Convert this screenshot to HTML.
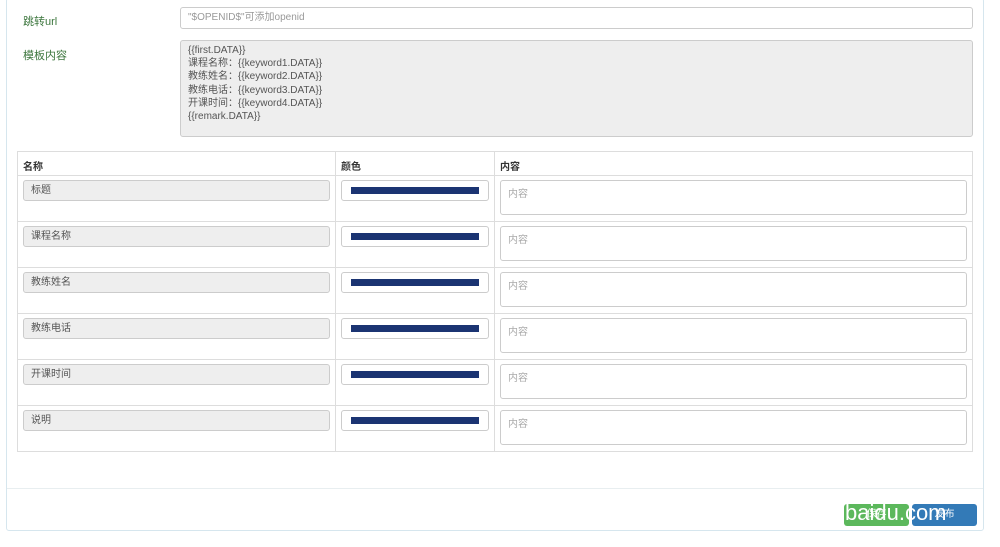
<!DOCTYPE html>
<html><head><meta charset="utf-8"><style>
body{margin:0;width:1000px;height:547px;background:#fff;font-family:"Liberation Sans","Noto Sans CJK SC",sans-serif;font-size:10px;color:#555;position:relative;overflow:hidden}
.abs{position:absolute;box-sizing:border-box}
.panel{left:6px;top:-2px;width:978px;height:533px;border:1px solid #d6e6ee;border-radius:3px}
.lbl{color:#3c763d;font-size:11px}
.inp{border:1px solid #ccc;border-radius:3px;background:#fff}
.gray{background:#eee}
.hl{position:absolute;left:17px;width:956px;height:1px;background:#ddd}
.vl{position:absolute;top:151px;width:1px;height:301px;background:#ddd}
.th{position:absolute;top:158px;font-weight:bold;color:#333}
.ni{position:absolute;left:23px;width:307px;height:21px;background:#eee;border:1px solid #ccc;border-radius:3px;box-sizing:border-box;padding:0 7px;line-height:19px;color:#555}
.ci{position:absolute;left:341px;width:148px;height:21px;border:1px solid #ccc;border-radius:3px;box-sizing:border-box;background:#fff}
.ci i{position:absolute;left:9px;top:6px;width:128px;height:7px;background:#1b3472}
.ti{position:absolute;left:500px;width:467px;height:35px;border:1px solid #ccc;border-radius:3px;box-sizing:border-box;padding:4px 7px;color:#aaa}
</style></head><body>
<div class="abs panel"></div>
<div class="abs lbl" style="left:23px;top:13px">跳转url</div>
<div class="abs inp" style="left:180px;top:7px;width:793px;height:22px;padding:0 7px;line-height:20px;color:#999">"$OPENID$"可添加openid</div>
<div class="abs lbl" style="left:23px;top:47px">模板内容</div>
<div class="abs inp gray" style="left:180px;top:40px;width:793px;height:97px;padding:3px 7px;line-height:13.2px;color:#555">{{first.DATA}}<br>课程名称：{{keyword1.DATA}}<br>教练姓名：{{keyword2.DATA}}<br>教练电话：{{keyword3.DATA}}<br>开课时间：{{keyword4.DATA}}<br>{{remark.DATA}}</div>

<div class="hl" style="top:151px"></div>
<div class="hl" style="top:175px"></div>
<div class="hl" style="top:221px"></div>
<div class="hl" style="top:267px"></div>
<div class="hl" style="top:313px"></div>
<div class="hl" style="top:359px"></div>
<div class="hl" style="top:405px"></div>
<div class="hl" style="top:451px"></div>
<div class="vl" style="left:17px"></div>
<div class="vl" style="left:335px"></div>
<div class="vl" style="left:494px"></div>
<div class="vl" style="left:972px"></div>
<div class="th" style="left:23px">名称</div>
<div class="th" style="left:341px">颜色</div>
<div class="th" style="left:500px">内容</div>

<div class="ni" style="top:180px">标题</div><div class="ci" style="top:180px"><i></i></div><div class="ti" style="top:180px">内容</div>
<div class="ni" style="top:226px">课程名称</div><div class="ci" style="top:226px"><i></i></div><div class="ti" style="top:226px">内容</div>
<div class="ni" style="top:272px">教练姓名</div><div class="ci" style="top:272px"><i></i></div><div class="ti" style="top:272px">内容</div>
<div class="ni" style="top:318px">教练电话</div><div class="ci" style="top:318px"><i></i></div><div class="ti" style="top:318px">内容</div>
<div class="ni" style="top:364px">开课时间</div><div class="ci" style="top:364px"><i></i></div><div class="ti" style="top:364px">内容</div>
<div class="ni" style="top:410px">说明</div><div class="ci" style="top:410px"><i></i></div><div class="ti" style="top:410px">内容</div>

<div class="abs" style="left:7px;top:488px;width:976px;border-top:1px solid #e8eef0"></div>
<div class="abs" style="left:844px;top:504px;width:65px;height:22px;background:#5cb85c;border-radius:3px;color:#fff;text-align:center;line-height:22px">保存</div>
<div class="abs" style="left:912px;top:504px;width:65px;height:22px;background:#337ab7;border-radius:3px;color:#fff;text-align:center;line-height:22px">发布</div>
<div class="abs" style="left:845px;top:500px;font-size:22px;color:#fff">baidu.com</div>
</body></html>
